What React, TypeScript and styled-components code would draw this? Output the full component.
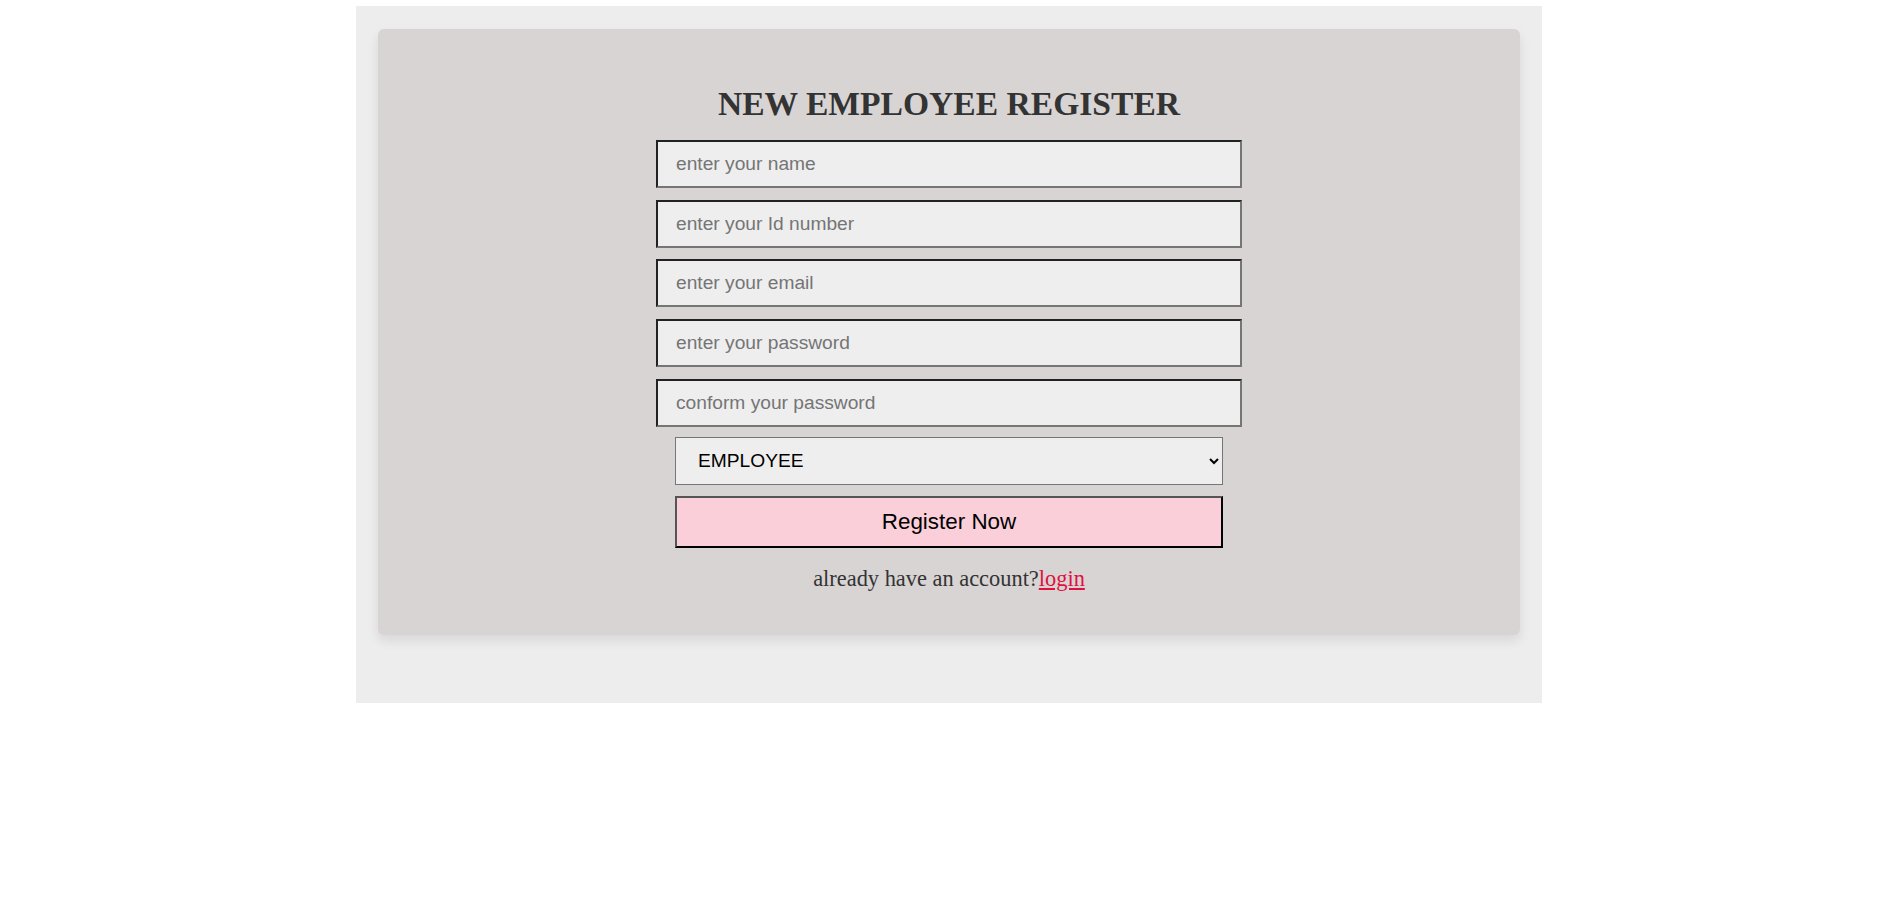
import React from "react";
import styled, { createGlobalStyle } from "styled-components";

// STYLES
const GlobalStyle = createGlobalStyle`
  html, body {
    margin: 0;
    padding: 0;
    background: #fff;
  }

  body {
    font-family: "Liberation Serif", "Times New Roman", serif;
    padding-right: 3px;
  }

  * {
    box-sizing: border-box;
  }
`;

const Page = styled.main`
  width: 1186px;
  margin: 6px auto 0;
  padding: 23px 22px 68px;
  background: #ededed;
`;

const Card = styled.section`
  background: #d8d4d4;
  border-radius: 6px;
  box-shadow: 0 6px 12px rgba(0, 0, 0, 0.09);
  padding: 56px 0 43px;

  display: flex;
  flex-direction: column;
  align-items: center;
`;

const Title = styled.h1`
  margin: 0 0 18px;
  font-family: "Liberation Serif", "Times New Roman", serif;
  font-size: 33.6px;
  font-weight: 700;
  line-height: 37px;
  color: #333;
`;

const Form = styled.form`
  width: 586px;
  display: flex;
  flex-direction: column;
  align-items: center;
`;

const Input = styled.input`
  width: 100%;
  height: 48px;
  margin-bottom: 11.7px;
  padding: 0 18px;

  font-family: "Liberation Sans", Arial, sans-serif;
  font-size: 19.2px;
  color: #111;
  background: #eeeeee;

  border-style: solid;
  border-width: 2px;
  border-color: #222 #757575 #757575 #222;
  outline: none;

  &::placeholder {
    color: #757575;
  }

  &:last-of-type {
    margin-bottom: 10px;
  }
`;

const Select = styled.select`
  width: 548px;
  height: 48px;
  margin-bottom: 11px;
  padding: 0 12px 0 18px;

  font-family: "Liberation Sans", Arial, sans-serif;
  font-size: 19.2px;
  color: #000;
  background: #eeeeee;
  border: 1px solid #767676;
  outline: none;
`;

const Button = styled.button`
  width: 548px;
  height: 52px;

  font-family: "Liberation Sans", Arial, sans-serif;
  font-size: 22.4px;
  color: #000;
  background: #fbcfd9;

  border-style: solid;
  border-width: 2px;
  border-color: #555 #000 #000 #555;
  cursor: pointer;
`;

const Footer = styled.p`
  margin: 18px 0 0;
  font-family: "Liberation Serif", "Times New Roman", serif;
  font-size: 22.4px;
  line-height: 26px;
  color: #333;
`;

const LoginLink = styled.a`
  color: #e0103f;
  text-decoration: underline;
`;

const fields = [
  { type: "text", placeholder: "enter your name" },
  { type: "text", placeholder: "enter your Id number" },
  { type: "email", placeholder: "enter your email" },
  { type: "password", placeholder: "enter your password" },
  { type: "password", placeholder: "conform your password" },
];

const App: React.FC = () => {
  return (
    <>
      <GlobalStyle />
      <Page>
        <Card>
          <Title>NEW EMPLOYEE REGISTER</Title>
          <Form onSubmit={(e) => e.preventDefault()}>
            {fields.map((f) => (
              <Input key={f.placeholder} type={f.type} placeholder={f.placeholder} />
            ))}
            <Select defaultValue="employee">
              <option value="employee">EMPLOYEE</option>
              <option value="admin">ADMIN</option>
            </Select>
            <Button type="submit">Register Now</Button>
          </Form>
          <Footer>
            already have an account?<LoginLink href="#">login</LoginLink>
          </Footer>
        </Card>
      </Page>
    </>
  );
};

export default App;
